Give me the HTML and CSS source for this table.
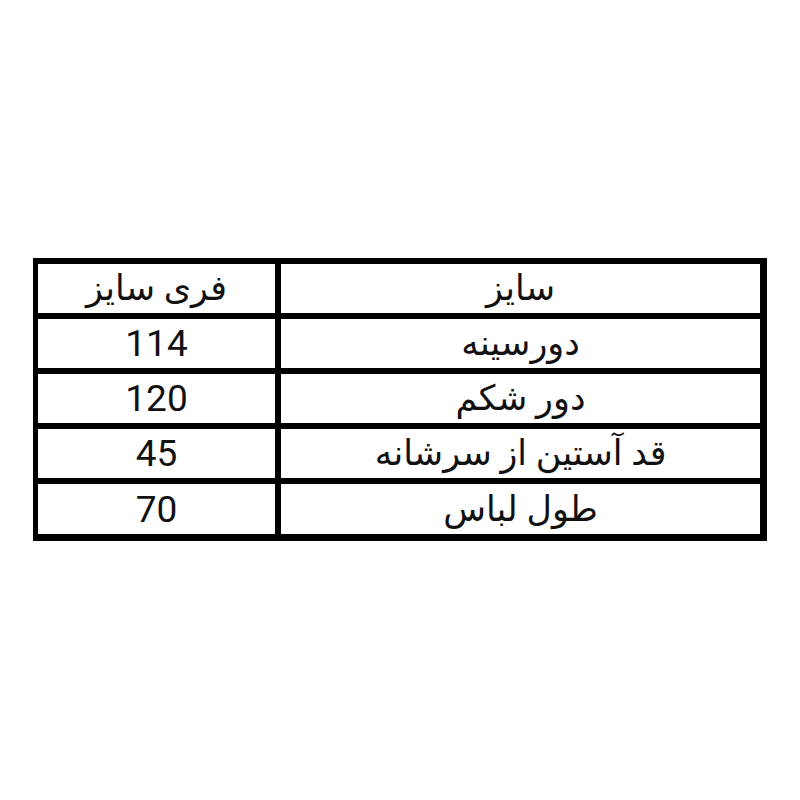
FILE: index.html
```html
<!DOCTYPE html>
<html lang="fa">
<head>
<meta charset="utf-8">
<title>جدول سایز</title>
<link rel="stylesheet" href="styles.css">
</head>
<body>
<main class="page">
  <div class="size-table" dir="rtl">
    <div class="cell label">سایز</div>
    <div class="cell value fa">فری سایز</div>
    <div class="cell label">دورسینه</div>
    <div class="cell value">114</div>
    <div class="cell label">دور شکم</div>
    <div class="cell value">120</div>
    <div class="cell label">قد آستین از سرشانه</div>
    <div class="cell value">45</div>
    <div class="cell label">طول لباس</div>
    <div class="cell value">70</div>
  </div>
</main>
</body>
</html>
```
FILE: styles.css
```css
html, body {
  margin: 0;
  padding: 0;
  background: #ffffff;
}
.page {
  width: 800px;
  height: 800px;
  box-sizing: border-box;
  padding-top: 258px;
  padding-left: 33px;
}
.size-table {
  display: grid;
  width: 734px;
  box-sizing: border-box;
  grid-template-columns: 479px 237px;
  grid-template-rows: 49px 49px 49px 49px 50px;
  gap: 6px;
  padding: 6px 7px 7px 5px;
  background: #000000;
}
.cell {
  background: #ffffff;
  display: flex;
  align-items: center;
  justify-content: center;
  font-family: Roboto, "DejaVu Sans", sans-serif;
  font-size: 37px;
  color: #111111;
  line-height: 1;
}
.label, .fa {
  font-size: 35px;
}
```
